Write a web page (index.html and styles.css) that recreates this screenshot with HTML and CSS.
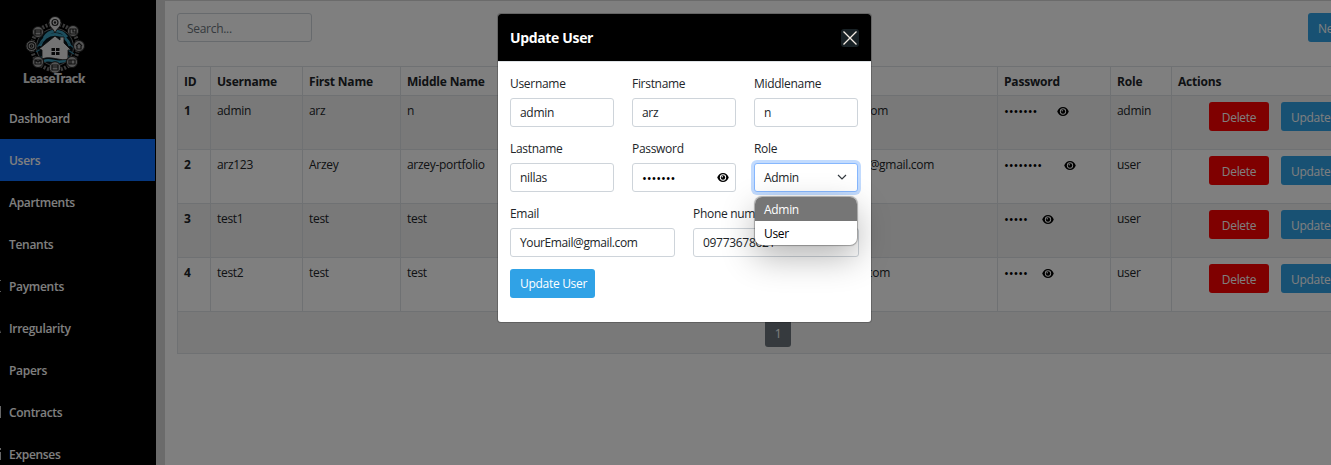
FILE: index.html
```html
<!DOCTYPE html>
<html lang="en">
<head>
<meta charset="utf-8">
<title>LeaseTrack</title>
<link rel="stylesheet" href="styles.css">
</head>
<body>
<svg class="defs" width="0" height="0">
  <symbol id="eye" viewBox="0 0 16 12">
    <path d="M8 0C4.300 0 1.500 2.400 .3 6c1.200 3.600 4 6 7.700 6s6.500-2.400 7.700-6C14.500 2.400 11.700 0 8 0z"/>
    <circle cx="8" cy="6" r="4.200" class="eye-ring"/>
    <circle cx="8" cy="6" r="2.900"/>
    <circle cx="7" cy="5" r=".9" class="eye-glint"/>
  </symbol>
</svg>
<div class="app">
  <aside class="sidebar">
    <div class="brand">
      <svg class="logo" width="60" height="58" viewBox="0 0 60 58">
        <circle cx="30" cy="31" r="23" fill="none" stroke="#777" stroke-width="4" stroke-dasharray="2 1.500"/>
        <circle cx="30" cy="31" r="18.500" fill="#061319" stroke="#777" stroke-width="1"/>
        <path d="M15 30a15.500 15.500 0 0 1 30 0M19 22c5-9 17-9 23-1M16 42c8-7 19 4 28-2M19 45c7-3 15 4 22-1" fill="none" stroke="#3b9dbb" stroke-width="2.600"/>
        <path d="M12 31l6-6M11 36l6-4M43 27l6 5M43 34l6 4" stroke="#317f9b" stroke-width="1.500"/>
        <path d="M14 33L30 20l5 4v-3h4v6l7 7h-3v9c-7 3-17-4-26 0v-9z" fill="#e6e6e6" stroke="#111" stroke-width=".8"/>
        <path d="M26.500 32H30v3h-3.500zM31 32h3.500v3H31zM26.500 36H30v3h-3.500zM31 36h3.500v3H31z" fill="#111"/>
        <g fill="#aaa" stroke="#222" stroke-width="1">
          <circle cx="13" cy="16" r="5.500"/><circle cx="48" cy="15" r="5.500"/>
          <circle cx="6.500" cy="30" r="5.500"/><circle cx="54" cy="30" r="5.500"/>
          <circle cx="13" cy="46" r="5.500"/><circle cx="47" cy="46" r="5.500"/>
          <circle cx="30" cy="51.500" r="5.800"/>
          <path d="M30 17c-2-5-6-6-6-10.500a6 6 0 0 1 12 0C36 11 32 12 30 17z" fill="#ddd"/>
        </g>
        <g fill="none" stroke="#222" stroke-width="1.200">
          <circle cx="30" cy="6.500" r="3"/><circle cx="30" cy="6.500" r=".7"/>
          <circle cx="6.500" cy="30" r="3.400"/><circle cx="6.500" cy="30" r="1.200"/>
          <path d="M10 14h6v5h-6zM10 16h6M45 13h6v5h-6zM48 13v3h3M51 30l3-3 3 3M52 30v3h4v-3M10 44h6v4h-6zM10 44l3 2 3-2M44 44h6v4h-6zM46 44v4M27 49h6v5h-6zM27 51h6"/>
        </g>
      </svg>
      <div class="brand-name">LeaseTrack</div>
    </div>
    <nav class="nav">
      <a class="nav-item"><span>Dashboard</span></a>
      <a class="nav-item active"><span>Users</span></a>
      <a class="nav-item"><span>Apartments</span></a>
      <a class="nav-item"><span>Tenants</span></a>
      <a class="nav-item"><svg class="edge" width="2" height="14"><path d="M0 1.500h1M0 12.500h1" stroke="#bbb"/></svg><span>Payments</span></a>
      <a class="nav-item"><svg class="edge" width="2" height="14"><path d="M0 9l1 3H0z" fill="#bbb"/></svg><span>Irregularity</span></a>
      <a class="nav-item"><span>Papers</span></a>
      <a class="nav-item"><svg class="edge" width="2" height="14"><path d="M0 1h1v12H0z" fill="#ccc"/></svg><span>Contracts</span></a>
      <a class="nav-item"><svg class="edge" width="2" height="14"><path d="M0 1h1v2H0zM0 5h1v8H0z" fill="#ccc"/></svg><span>Expenses</span></a>
    </nav>
  </aside>
  <main class="main">
    <div class="toolbar">
      <div class="search">Search...</div>
      <div class="button new">New User</div>
    </div>
    <div class="table">
      <div class="row head"><div>ID</div><div>Username</div><div>First Name</div><div>Middle Name</div><div></div><div></div><div>Password</div><div>Role</div><div>Actions</div></div>
      <div class="row odd"><div class="id">1</div><div>admin</div><div>arz</div><div>n</div><div></div><div class="mail mail-a">.com</div><div class="secret"><span class="dots len7">•••••••</span><svg class="eye"><use href="#eye"/></svg></div><div>admin</div><div class="actions"><span class="button delete">Delete</span><span class="button">Update</span></div></div>
      <div class="row"><div class="id">2</div><div>arz123</div><div>Arzey</div><div>arzey-portfolio</div><div></div><div class="mail mail-b">@gmail.com</div><div class="secret"><span class="dots len8">••••••••</span><svg class="eye"><use href="#eye"/></svg></div><div>user</div><div class="actions"><span class="button delete">Delete</span><span class="button">Update</span></div></div>
      <div class="row odd"><div class="id">3</div><div>test1</div><div>test</div><div>test</div><div></div><div></div><div class="secret"><span class="dots len5">•••••</span><svg class="eye"><use href="#eye"/></svg></div><div>user</div><div class="actions"><span class="button delete">Delete</span><span class="button">Update</span></div></div>
      <div class="row"><div class="id">4</div><div>test2</div><div>test</div><div>test</div><div></div><div class="mail mail-c">.com</div><div class="secret"><span class="dots len5">•••••</span><svg class="eye"><use href="#eye"/></svg></div><div>user</div><div class="actions"><span class="button delete">Delete</span><span class="button">Update</span></div></div>
      <div class="pager"><span class="page">1</span></div>
    </div>
  </main>
</div>
<div class="backdrop">
  <section class="modal">
    <header class="modal-head">
      <h1 class="modal-title">Update User</h1>
      <span class="close"><svg width="18" height="18" viewBox="0 0 18 18"><path d="M2.500 2.500l13 13M15.500 2.500l-13 13" stroke="#f5ede4" stroke-width="1.300"/></svg></span>
    </header>
    <div class="form">
      <div class="fields three">
        <div class="field"><label>Username</label><div class="input">admin</div></div>
        <div class="field"><label>Firstname</label><div class="input">arz</div></div>
        <div class="field"><label>Middlename</label><div class="input">n</div></div>
        <div class="field"><label>Lastname</label><div class="input">nillas</div></div>
        <div class="field"><label>Password</label><div class="input"><span class="dots">•••••••</span><svg class="eye"><use href="#eye"/></svg></div></div>
        <div class="field role"><label>Role</label><div class="input focus">Admin<svg class="chevron" width="10" height="7" viewBox="0 0 10 7"><path d="M1 1l4 4 4-4" fill="none" stroke="#343a40" stroke-width="1.200"/></svg></div>
          <div class="menu"><div class="option selected">Admin</div><div class="option">User</div></div>
        </div>
      </div>
      <div class="fields two">
        <div class="field"><label>Email</label><div class="input email">YourEmail@gmail.com</div></div>
        <div class="field"><label>Phone number</label><div class="input">09773678621</div></div>
      </div>
      <div class="button submit">Update User</div>
    </div>
  </section>
</div>
</body>
</html>
```
FILE: styles.css
```css
* { box-sizing: border-box; }
body {
  margin: 0;
  width: 1331px;
  height: 465px;
  overflow: hidden;
  position: relative;
  background: #fff;
  color: #212529;
  font: 12px/18px "Open Sans", "Noto Sans", sans-serif;
  letter-spacing: -0.3px;
}
.defs { position: absolute; }
.app { display: flex; height: 465px; overflow: hidden; }
.sidebar { width: 156px; flex: none; background: #000; color: #fff; overflow: hidden; }
.brand { height: 97px; padding: 16px 0 0 25px; }
.logo { display: block; }
.brand-name {
  width: 64px;
  margin: -2px 0 0 -2px;
  font: 800 13px/13px Lato, sans-serif;
  letter-spacing: -0.15px;
  white-space: nowrap;
  color: #e0e0e0;
}
.nav-item {
  position: relative;
  display: flex;
  align-items: center;
  height: 42px;
  padding: 2px 0 0 9px;
  font-weight: 600;
  width: 155px;
}
.active { background: #0d6efd; }
.edge { position: absolute; left: 0; top: 14px; }
.main {
  width: 1240px;
  flex: none;
  border-left: 9px solid #d6d6d6;
  border-top: 1px solid #d6d6d6;
  padding: 12px 0 0 12px;
}
.toolbar { display: flex; width: 1200px; height: 53px; justify-content: space-between; align-items: flex-start; }
.search {
  width: 135px;
  height: 29px;
  padding: 6px 9px 4px;
  border: 1px solid #ced4da;
  border-radius: 3px;
  color: #6c757d;
}
.button {
  display: inline-block;
  height: 29px;
  padding: 6px 10px 5px;
  border-radius: 3px;
  background: #30a2e6;
  color: #fff;
  white-space: nowrap;
}
.row .button { padding-top: 7px; }
.new { width: 69px; padding-top: 7px; }
.table { width: 1200px; border: 1px solid #dee2e6; border-bottom: 0; }
.row {
  display: grid;
  grid-template-columns: 33px 92px 98px 110px 280px 207px 113px 61px 1fr;
  height: 54px;
  border-bottom: 1px solid #dee2e6;
}
.row > div { padding: 6px 6px 0; border-right: 1px solid #dee2e6; white-space: nowrap; }
.head { height: 29px; font-weight: 700; letter-spacing: -0.2px; }
.odd, .pager { background: #f2f2f2; }
.id { font-weight: 700; }
.row > .mail { text-align: right; }
.row > .mail-a { padding-right: 109px; }
.row > .mail-b { padding-right: 63px; }
.row > .mail-c { padding-right: 107px; }
.secret { display: flex; align-items: flex-start; }
.dots { font-size: 13px; letter-spacing: -0.15px; color: #000; }
.len5 { width: 38px; }
.len7 { width: 53px; }
.len8 { width: 60px; }
.eye { width: 12px; height: 9px; flex: none; fill: #000; overflow: visible; }
.eye-ring { fill: #fff; }
.eye-glint { fill: #fff; }
.secret .eye { margin-top: 5px; }
.row > .actions { display: flex; gap: 12px; padding: 6px 0 0 37px; }
.delete { background: #f00; width: 60px; text-align: center; }
.pager { height: 42px; border-bottom: 1px solid #dee2e6; padding: 5px 0 0 587px; }
.page {
  display: block;
  width: 26px;
  height: 30px;
  padding-top: 8px;
  border-radius: 3px;
  background: #6c757d;
  color: #fff;
  text-align: center;
}
.backdrop { position: absolute; inset: 0; background: rgba(0, 0, 0, .5); padding: 14px 0 0 498px; }
.modal { width: 373px; height: 308px; border-radius: 3px; background: #fff; box-shadow: 0 0 0 1px rgba(0, 0, 0, .2); }
.modal-head {
  display: flex;
  justify-content: space-between;
  align-items: center;
  height: 47px;
  padding: 0 12px;
  background: #000;
  border-radius: 3px 3px 0 0;
}
.modal-title { margin: 0; font-size: 14px; font-weight: 700; letter-spacing: -0.35px; color: #fff; }
.close { display: grid; width: 18px; height: 18px; border-radius: 3px; background: #182125; }
.form { padding: 13px 12px 0; border-top: 1px solid #dee2e6; }
.fields { display: grid; column-gap: 18px; }
.three { grid-template-columns: repeat(3, 104px); }
.two { grid-template-columns: 165px 166px; }
.field { height: 65px; }
.field label { display: block; height: 23px; white-space: nowrap; }
.role { position: relative; }
.input {
  display: flex;
  align-items: center;
  justify-content: space-between;
  height: 29px;
  padding: 0 6px 0 9px;
  border: 1px solid #ced4da;
  border-radius: 3px;
  background: #fff;
}
.email { letter-spacing: -0.4px; }
.focus { border-color: #86b7fe; box-shadow: 0 0 0 3px #c2dbfe; padding-right: 10px; }
.menu {
  position: absolute;
  left: 1px;
  top: 57px;
  width: 102px;
  height: 48px;
  border-radius: 7px;
  overflow: hidden;
  background: #fff;
  color: #000;
  box-shadow: 0 0 1px 1px rgba(0, 0, 0, .3), 0 12px 34px rgba(0, 0, 0, .3);
}
.option { height: 24px; padding: 4px 9px; }
.selected { background: #767676; color: #fff; }
.submit { width: 85px; margin-top: -1px; }
```
